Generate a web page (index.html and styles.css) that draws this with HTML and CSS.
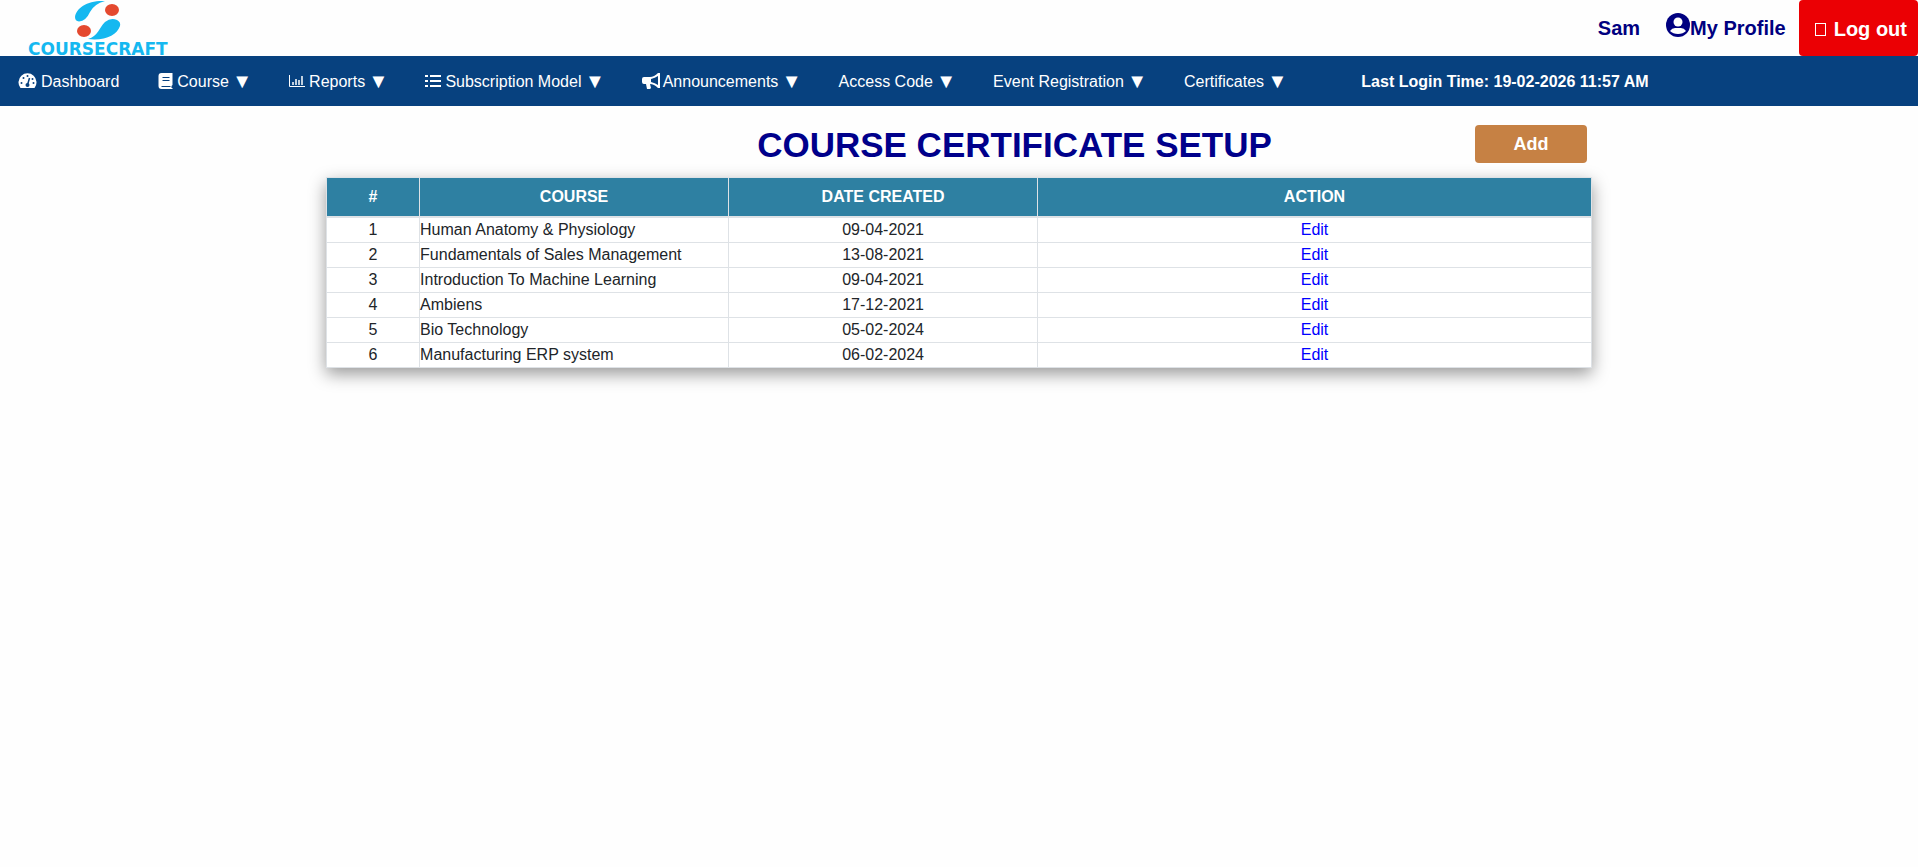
FILE: index.html
```html
<!DOCTYPE html>
<html lang="en">
<head>
<meta charset="utf-8">
<title>Course Certificate Setup</title>
<link rel="stylesheet" href="styles.css">
</head>
<body>
<header class="topbar">
  <a class="logo" href="#">
    <svg class="logo-art" viewBox="0 0 48 42" aria-hidden="true">
      <path fill="#15b8f0" d="M31 1C14 0 2 8 1 17q0 4 4 4.500Q12 21 16 12 20 4 31 1Z"/>
      <path fill="#15b8f0" d="M14 39C24 36 25 28 31 22q6-5 12-2 4 2 3 6C43 35 31 41 14 39Z"/>
      <ellipse cx="38" cy="10" rx="7" ry="6" fill="#e4492f"/>
      <ellipse cx="10" cy="31" rx="7" ry="6" fill="#e4492f"/>
    </svg>
    <span class="wordmark">COURSECRAFT</span>
  </a>
  <nav class="account" aria-label="Account">
    <a class="user" href="#">Sam</a>
    <a class="profile" href="#"><svg class="avatar" viewBox="0 0 24 24" aria-hidden="true"><circle cx="12" cy="12" r="12"/><circle class="cut" cx="12" cy="9" r="4.500"/><path class="cut" d="M4 18q2-3 5-3h6q3 0 5 3-3 3-8 3t-8-3Z"/></svg>My Profile</a>
    <a class="logout" href="#"><span class="box"></span>Log out</a>
  </nav>
</header>
<nav class="menu" aria-label="Main">
  <a href="#"><svg class="icon" viewBox="0 0 18 16" aria-hidden="true"><path fill="currentColor" d="M2 15a9 9 0 1 1 14 0Z"/><path stroke="#07417f" stroke-width="1.500" d="M9 12l2-7"/><g fill="#07417f"><circle cx="9" cy="12" r="2"/><circle cx="3" cy="10" r="1"/><circle cx="5" cy="5" r="1"/><circle cx="9" cy="3" r="1"/><circle cx="14" cy="6" r="1"/><circle cx="15" cy="10" r="1"/></g></svg>Dashboard</a>
  <a href="#"><svg class="icon book" viewBox="0 0 14 16" aria-hidden="true"><path fill="currentColor" d="M3 0h11v12l-1 1v2h1v1H3q-3 0-3-3V3q0-3 3-3Z"/><path stroke="#07417f" d="M4 4.500h7M4 7.500h7M3 13.500h9"/></svg>Course <span class="arrow">▼</span></a>
  <a href="#"><svg class="icon chart" viewBox="0 0 16 14" aria-hidden="true"><path fill="none" stroke="currentColor" d="M.5 1v11.500H16"/><path stroke="currentColor" stroke-width="1.500" d="M4 8v3M7 5v6M10 6v5M13 2v9"/></svg>Reports <span class="arrow">▼</span></a>
  <a href="#"><svg class="icon list" viewBox="0 0 16 14" aria-hidden="true"><path stroke="currentColor" stroke-width="2" d="M0 2h3M0 7h3M0 12h3M5 2h11M5 7h11M5 12h11"/></svg>Subscription Model <span class="arrow">▼</span></a>
  <a href="#"><svg class="icon horn" viewBox="0 0 18 16" aria-hidden="true"><path fill="currentColor" fill-rule="evenodd" d="M16 0h2v15h-2q-4-4-8-4l1 4-1 1H5l-1-5H2q-2 0-2-2V6q0-2 2-2h6q4 0 8-4ZM16 3q-3 2-7 3v3q4 1 7 3Z"/></svg>Announcements <span class="arrow">▼</span></a>
  <a href="#">Access Code <span class="arrow">▼</span></a>
  <a href="#">Event Registration <span class="arrow">▼</span></a>
  <a href="#">Certificates <span class="arrow">▼</span></a>
  <strong class="last-login">Last Login Time: 19-02-2026 11:57 AM</strong>
</nav>
<main class="content">
  <div class="heading">
    <h1>COURSE CERTIFICATE SETUP</h1>
    <button class="add" type="button">Add</button>
  </div>
  <table class="grid">
    <thead>
      <tr><th class="col-num">#</th><th class="col-mid">COURSE</th><th class="col-mid">DATE CREATED</th><th>ACTION</th></tr>
    </thead>
    <tbody>
      <tr><td>1</td><td class="name">Human Anatomy &amp; Physiology</td><td>09-04-2021</td><td><a href="#">Edit</a></td></tr>
      <tr><td>2</td><td class="name">Fundamentals of Sales Management</td><td>13-08-2021</td><td><a href="#">Edit</a></td></tr>
      <tr><td>3</td><td class="name">Introduction To Machine Learning</td><td>09-04-2021</td><td><a href="#">Edit</a></td></tr>
      <tr><td>4</td><td class="name">Ambiens</td><td>17-12-2021</td><td><a href="#">Edit</a></td></tr>
      <tr><td>5</td><td class="name">Bio Technology</td><td>05-02-2024</td><td><a href="#">Edit</a></td></tr>
      <tr><td>6</td><td class="name">Manufacturing ERP system</td><td>06-02-2024</td><td><a href="#">Edit</a></td></tr>
    </tbody>
  </table>
</main>
</body>
</html>
```
FILE: styles.css
```css
* { box-sizing: border-box; }

body {
  margin: 0;
  background: #fefefe;
  color: #212529;
  font: 16px/24px "Liberation Sans", Arial, "DejaVu Sans", sans-serif;
}

a { text-decoration: none; }

.topbar {
  display: flex;
  justify-content: space-between;
  height: 56px;
}

.logo {
  display: flex;
  flex-direction: column;
  align-items: center;
  margin-left: 28px;
}

.logo-art { display: block; width: 48px; height: 42px; }

.wordmark {
  color: #15b8f0;
  font: bold 17px/14px "DejaVu Sans", sans-serif;
}

.account {
  display: flex;
  align-items: center;
  font-size: 20px;
  font-weight: bold;
}

.account a { color: #000080; }
.profile { display: flex; margin: 0 13px 0 26px; }
.avatar { width: 24px; height: 24px; margin-top: -3px; fill: #000080; }
.avatar .cut { fill: #fefefe; }

.account .logout {
  display: flex;
  align-items: center;
  gap: 8px;
  height: 100%;
  padding: 2px 11px 0 16px;
  border-radius: 4px;
  background: #eb0004;
  color: #fff;
}

.box { width: 11px; height: 13px; border: 1px solid #fff; }

.menu {
  display: flex;
  align-items: center;
  gap: 39px;
  height: 50px;
  padding: 1px 0 0 18px;
  background: #07417f;
  color: #fff;
  white-space: nowrap;
}

.menu a { color: #fff; }
.icon { width: 19px; height: 16px; margin-right: 4px; vertical-align: -2px; }
.book { width: 15px; }
.chart, .list { width: 16px; height: 14px; vertical-align: -1px; }
.horn { width: 18px; margin-right: 3px; }
.arrow { margin: 0 -2px 0 -1px; font-size: 20px; line-height: 16px; vertical-align: -1px; }
.last-login { margin-left: 37px; }

.content {
  width: 66%;
  margin: 0 auto;
  padding-bottom: 48px;
}

.heading {
  display: grid;
  grid-template-columns: 1fr auto;
  padding: 19px 5px 14px 0;
}

h1 {
  margin: 0;
  padding: 2px 0 0 228px;
  color: #00008b;
  font-size: 35px;
  line-height: 36px;
  text-align: center;
}

.add {
  width: 112px;
  height: 38px;
  border: 0;
  border-radius: 4px;
  background: #c68144;
  color: #fff;
  font: bold 18px "Liberation Sans", Arial, sans-serif;
}

.grid {
  width: 100%;
  table-layout: fixed;
  border-collapse: collapse;
  background: #fff;
  box-shadow: 0 6px 16px rgba(0, 0, 0, 0.4);
  text-align: center;
}

.grid th, .grid td { border: 1px solid #dee2e6; padding: 0; }
.grid th { padding: 7px; border-bottom-width: 2px; background: #2e80a2; color: #fff; }
.grid .name { text-align: left; }
.grid a { color: #0000ff; }
.col-num { width: 93px; }
.col-mid { width: 309px; }
```
